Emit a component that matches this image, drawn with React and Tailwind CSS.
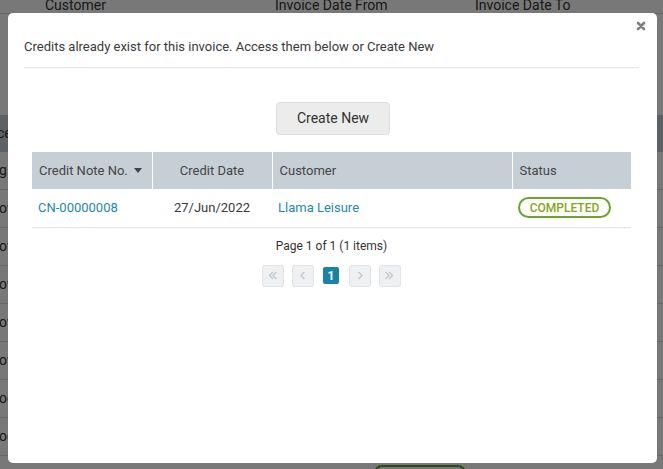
import React from 'react'

const bgRows = ['g', 'ov', 'ov', 'ov', 'ov', 'ov', 'oc', 'oc']

function Chevron({ dir = 'left', double = false }) {
  const d = dir === 'left' ? 'M6.5 2 L3 5.5 L6.5 9' : 'M3.5 2 L7 5.5 L3.5 9'
  const d2 = dir === 'left' ? 'M10 2 L6.5 5.5 L10 9' : 'M0 2 L3.5 5.5 L0 9'
  return (
    <svg width={double ? 12 : 10} height="11" viewBox={double ? (dir === 'left' ? '1 0 11 11' : '-1 0 11 11') : '0 0 10 11'} fill="none" stroke="#c3c8cd" strokeWidth="1.4">
      <path d={d} />
      {double && <path d={d2} />}
    </svg>
  )
}

function PageBtn({ children }) {
  return (
    <div className="w-[22px] h-[22px] rounded-[3px] border border-[#e1e4e7] bg-[#eef0f2] flex items-center justify-center">
      {children}
    </div>
  )
}

export default function App() {
  return (
    <div className="relative w-[663px] h-[469px] overflow-hidden bg-white font-['Roboto',sans-serif] text-[13px] text-[#333]">
      {/* page behind the modal */}
      <div className="flex flex-col">
        <div className="flex -mt-[5px] h-[19px] border-b border-[#dcdcdc] text-[14px]">
          <span className="ml-[45px] w-[230px]">Customer</span>
          <span className="w-[200px]">Invoice Date From</span>
          <span>Invoice Date To</span>
        </div>
        <div className="h-[101px]" />
        <div className="h-[37px] bg-[#c6ced6] flex items-center text-[14px]">
          <span className="-ml-[3px]">ce</span>
        </div>
        {bgRows.map((t, i) => (
          <div key={i} className="h-[38px] border-b border-[#dcdcdc] flex items-center text-[14px]">
            <span className="-ml-[1px]">{t}</span>
          </div>
        ))}
        <div className="mt-[9px] ml-[374px] w-[92px] h-[30px] rounded-[8px] border-2 border-[#5f9e24]" />
      </div>

      {/* overlay */}
      <div className="absolute inset-0 bg-black/[0.53]" />

      {/* modal */}
      <div className="absolute left-[8px] top-[13px] w-[649px] h-[450px] rounded-[5px] bg-white pl-[16px] pr-[18px]">
        <button className="absolute right-[9px] top-[6px] p-[2px]">
          <svg width="10" height="10" viewBox="0 0 10 10" stroke="#7d7d7d" strokeWidth="2.6" strokeLinecap="round">
            <path d="M2 2 L8 8 M8 2 L2 8" />
          </svg>
        </button>
        <p className="pt-[26px] leading-[16px] text-[13px] text-[#3a3a3a]">
          Credits already exist for this invoice. Access them below or Create New
        </p>
        <div className="mt-[12px] border-t border-[#e3e3e3]" />

        <div className="px-[8px]">
          <div className="flex justify-center mt-[34px]">
            <button className="ml-[3px] w-[114px] h-[33px] rounded-[4px] border border-[#dedede] bg-[#ececec] text-[14px] text-[#333]">
              Create New
            </button>
          </div>

          <table className="mt-[17px] w-[599px] border-collapse table-fixed">
            <thead>
              <tr className="h-[37px] bg-[#c6ced6] text-[#454545] text-[13px]">
                <th className="w-[120px] text-left font-normal pl-[7px] border-r border-white">
                  <span className="inline-flex items-center gap-[6px]">
                    Credit Note No.
                    <svg width="8" height="5" viewBox="0 0 8 5"><path d="M0 0 H8 L4 5 Z" fill="#444" /></svg>
                  </span>
                </th>
                <th className="w-[120px] text-center font-normal border-r border-white">Credit Date</th>
                <th className="w-[240px] text-left font-normal pl-[7px] border-r border-white">Customer</th>
                <th className="text-left font-normal pl-[7px]">Status</th>
              </tr>
            </thead>
            <tbody>
              <tr className="h-[38px] border-b border-[#e2e2e2]">
                <td className="pl-[6px] text-[#1f88b1]">CN-00000008</td>
                <td className="text-center text-[#3a3a3a]">27/Jun/2022</td>
                <td className="pl-[6px] text-[#1f88b1]">Llama Leisure</td>
                <td className="pl-[6px]">
                  <span className="inline-flex items-center justify-center w-[93px] h-[21px] rounded-full border-2 border-[#6ba52a] text-[12px] font-medium text-[#86a51a]">
                    COMPLETED
                  </span>
                </td>
              </tr>
            </tbody>
          </table>

          <p className="mt-[10px] text-center text-[12px] text-[#333] leading-[16px]">Page 1 of 1 (1 items)</p>

          <div className="mt-[11px] flex justify-center items-center">
            <PageBtn><Chevron dir="left" double /></PageBtn>
            <div className="ml-[8px]"><PageBtn><Chevron dir="left" /></PageBtn></div>
            <div className="ml-[9px] w-[16px] h-[17px] rounded-[2px] bg-[#1a82a6] text-white text-[12px] font-bold flex items-center justify-center">1</div>
            <div className="ml-[10px]"><PageBtn><Chevron dir="right" /></PageBtn></div>
            <div className="ml-[8px]"><PageBtn><Chevron dir="right" double /></PageBtn></div>
          </div>
        </div>
      </div>
    </div>
  )
}
